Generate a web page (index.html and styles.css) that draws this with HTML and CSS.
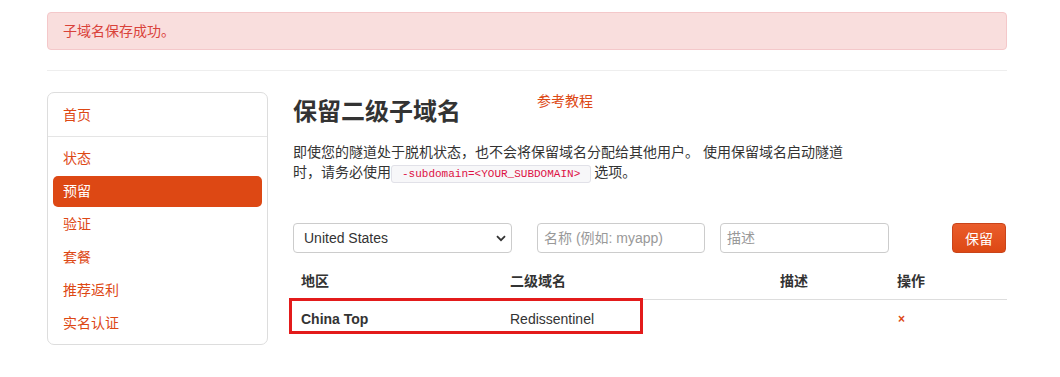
FILE: index.html
```html
<!DOCTYPE html>
<html lang="zh">
<head>
<meta charset="utf-8">
<title>保留二级子域名</title>
<link rel="stylesheet" href="styles.css">
</head>
<body>
<div class="container">
  <div class="alert">子域名保存成功。</div>
  <hr class="divider">
  <div class="layout">
    <aside class="sidebar">
      <ul class="nav">
        <li><a href="#">首页</a></li>
        <li class="nav-sep"></li>
        <li><a href="#">状态</a></li>
        <li class="active"><a href="#">预留</a></li>
        <li><a href="#">验证</a></li>
        <li><a href="#">套餐</a></li>
        <li><a href="#">推荐返利</a></li>
        <li><a href="#">实名认证</a></li>
      </ul>
    </aside>
    <main class="main">
      <div class="title-row">
        <h2 class="title">保留二级子域名</h2>
        <a class="tutorial" href="#">参考教程</a>
      </div>
      <p class="intro">即使您的隧道处于脱机状态，也不会将保留域名分配给其他用户。 使用保留域名启动隧道时，请务必使用<code class="code">-subdomain=&lt;YOUR_SUBDOMAIN&gt;</code>选项。</p>
      <form class="form-row">
        <div class="select-wrap">
          <select class="select"><option>United States</option></select>
          <svg class="chevron" width="10" height="7" viewBox="0 0 10 7"><path d="M1 1.2 L5 5.2 L9 1.2" fill="none" stroke="#333" stroke-width="1.8"/></svg>
        </div>
        <input class="input input-name" type="text" placeholder="名称 (例如: myapp)">
        <input class="input input-desc" type="text" placeholder="描述">
        <button class="btn" type="button">保留</button>
      </form>
      <div class="table-wrap">
        <table class="table">
          <thead>
            <tr><th class="c1">地区</th><th class="c2">二级域名</th><th class="c3">描述</th><th class="c4">操作</th></tr>
          </thead>
          <tbody>
            <tr><td class="region">China Top</td><td>Redissentinel</td><td></td><td><a class="del" href="#">×</a></td></tr>
          </tbody>
        </table>
        <div class="highlight"></div>
      </div>
    </main>
  </div>
</div>
</body>
</html>
```

FILE: styles.css
```css
* { box-sizing: border-box; }
body {
  margin: 0;
  background: #fff;
  color: #333;
  font-family: "Liberation Sans", "Noto Sans CJK SC", sans-serif;
  font-size: 14px;
  line-height: 20px;
}
.container {
  width: 960px;
  margin-left: 47px;
  padding-top: 12px;
}
.alert {
  height: 38px;
  padding: 8px 15px;
  background: #f9dedd;
  border: 1px solid #f4c8ca;
  border-radius: 4px;
  color: #d9423a;
}
.divider {
  margin: 20px 0 21px;
  border: 0;
  border-top: 1px solid #eee;
}
.layout {
  display: flex;
  align-items: flex-start;
  gap: 25px;
}
.sidebar {
  width: 221px;
  flex: none;
  border: 1px solid #ddd;
  border-radius: 7px;
  padding: 6px 5px 4px;
}
.nav { list-style: none; margin: 0; padding: 0; }
.nav li { padding: 1px 0; }
.nav a {
  display: block;
  padding: 5px 10px;
  line-height: 21px;
  color: #dd4814;
  text-decoration: none;
  border-radius: 5px;
}
.nav .active a {
  background: #dd4814;
  color: #fff;
}
.nav .nav-sep {
  height: 1px;
  padding: 0;
  margin: 4px -5px 5px;
  background: #e5e5e5;
}
.main { flex: 1; min-width: 0; }
.title-row { display: flex; align-items: flex-start; }
.title {
  width: 244px;
  margin: 0;
  font-size: 24px;
  line-height: 40px;
  font-weight: bold;
  color: #333;
}
.tutorial {
  color: #dd4814;
  text-decoration: none;
  line-height: 20px;
  margin-top: -1px;
}
.intro {
  width: 560px;
  margin: 10px 0 0;
}
.code {
  font-family: "Liberation Mono", monospace;
  font-size: 11px;
  line-height: 20px;
  padding: 2px 10px;
  margin-right: 3px;
  color: #dd1144;
  background: #f7f7f9;
  border: 1px solid #e1e1e8;
  border-radius: 3px;
}
.form-row {
  display: flex;
  align-items: center;
  margin-top: 39px;
  height: 30px;
}
.select-wrap {
  position: relative;
  width: 219px;
  height: 30px;
}
.select {
  width: 100%;
  height: 30px;
  appearance: none;
  -webkit-appearance: none;
  background: #fff;
  border: 1px solid #ccc;
  border-radius: 4px;
  padding: 0 10px;
  font-family: inherit;
  font-size: 14px;
  color: #333;
}
.chevron {
  position: absolute;
  right: 6px;
  top: 12px;
  pointer-events: none;
}
.input {
  height: 30px;
  border: 1px solid #ccc;
  border-radius: 4px;
  padding: 0 6px;
  font-family: inherit;
  font-size: 14px;
  color: #333;
}
.input::placeholder { color: #999; }
.input-name { width: 168px; margin-left: 25px; }
.input-desc { width: 169px; margin-left: 15px; }
.btn {
  margin-left: auto;
  margin-right: 1px;
  width: 54px;
  height: 30px;
  border: 1px solid #c9441a;
  border-radius: 4px;
  background: linear-gradient(#ea5d2c, #dd4814);
  color: #fff;
  font-family: inherit;
  font-size: 14px;
  padding: 0;
}
.table-wrap {
  position: relative;
  margin-top: 10px;
}
.table {
  width: 100%;
  border-collapse: collapse;
}
.table th, .table td {
  text-align: left;
  padding: 8px;
  line-height: 20px;
}
.table th {
  font-weight: bold;
  border-bottom: 1px solid #ddd;
}
.c1 { width: 209px; }
.c2 { width: 270px; }
.c3 { width: 117px; }
.region { font-weight: bold; }
.del {
  color: #dd4814;
  text-decoration: none;
  font-size: 12px;
  font-weight: bold;
  margin-left: 1px;
}
.highlight {
  position: absolute;
  left: -4px;
  top: 35px;
  width: 354px;
  height: 36px;
  border: 3px solid #e31b1b;
  pointer-events: none;
}
```
